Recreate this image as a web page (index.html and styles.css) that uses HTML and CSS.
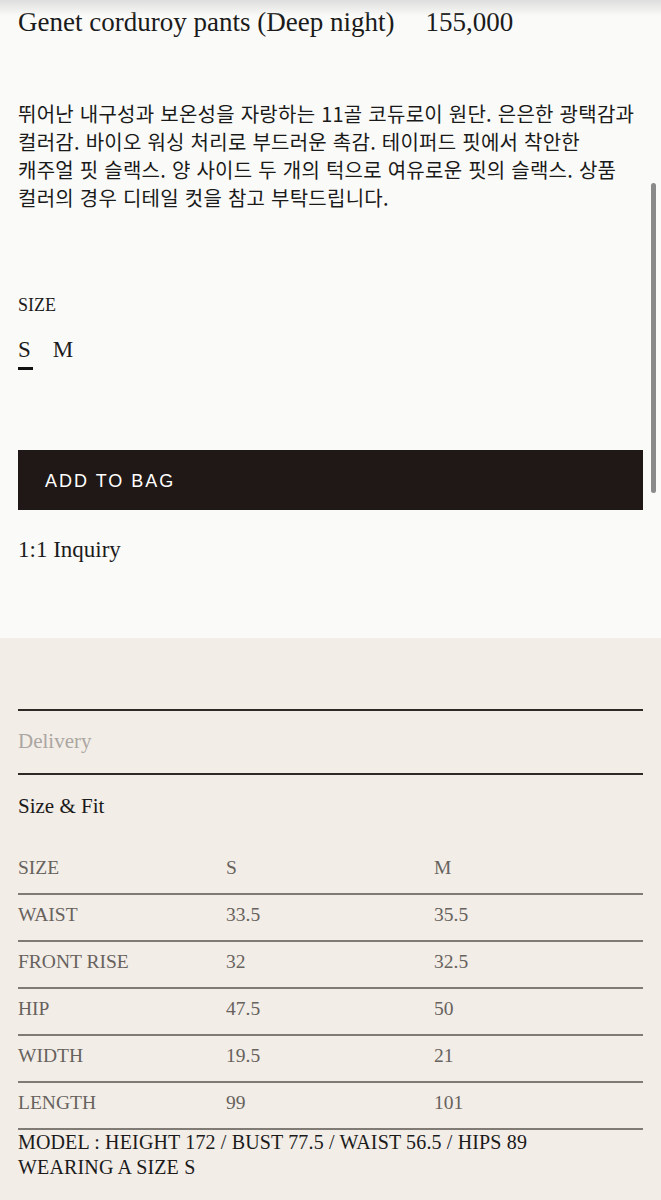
FILE: index.html
```html
<!DOCTYPE html>
<html lang="ko">
<head>
<meta charset="utf-8">
<title>Genet corduroy pants (Deep night)</title>
<link rel="stylesheet" href="styles.css">
</head>
<body>
<div class="top-shade"></div>
<div class="scrollbar"></div>
<main class="product">
  <header class="title-row">
    <h1 class="title">Genet corduroy pants (Deep night)</h1>
    <span class="price">155,000</span>
  </header>
  <p class="desc">뛰어난 내구성과 보온성을 자랑하는 11골 코듀로이 원단. 은은한 광택감과<br>컬러감. 바이오 워싱 처리로 부드러운 촉감. 테이퍼드 핏에서 착안한<br>캐주얼 핏 슬랙스. 양 사이드 두 개의 턱으로 여유로운 핏의 슬랙스. 상품<br>컬러의 경우 디테일 컷을 참고 부탁드립니다.</p>
  <section class="size-select">
    <div class="size-label">SIZE</div>
    <div class="options">
      <span class="opt active">S</span>
      <span class="opt">M</span>
    </div>
  </section>
  <button class="add-btn" type="button">ADD TO BAG</button>
  <a class="inquiry" href="#">1:1 Inquiry</a>
</main>
<section class="info">
  <div class="tab tab-muted">Delivery</div>
  <div class="tab tab-active">Size &amp; Fit</div>
  <table class="size-table">
    <tr><td>SIZE</td><td>S</td><td>M</td></tr>
    <tr><td>WAIST</td><td>33.5</td><td>35.5</td></tr>
    <tr><td>FRONT RISE</td><td>32</td><td>32.5</td></tr>
    <tr><td>HIP</td><td>47.5</td><td>50</td></tr>
    <tr><td>WIDTH</td><td>19.5</td><td>21</td></tr>
    <tr><td>LENGTH</td><td>99</td><td>101</td></tr>
  </table>
  <p class="model">MODEL : HEIGHT 172 / BUST 77.5 / WAIST 56.5 / HIPS 89<br>WEARING A SIZE S</p>
</section>
</body>
</html>
```
FILE: styles.css
```css
html, body {
  margin: 0;
  padding: 0;
}
body {
  background: #f2ede7;
  font-family: "Liberation Serif", "Times New Roman", serif;
  color: #1b1b1b;
}
.top-shade {
  position: absolute;
  left: 0;
  top: 0;
  width: 100%;
  height: 16px;
  background: linear-gradient(#dedede, rgba(250, 250, 248, 0));
  pointer-events: none;
}
.scrollbar {
  position: absolute;
  left: 651px;
  top: 183px;
  width: 5px;
  height: 310px;
  border-radius: 3px;
  background: #8a8a8a;
}
.product {
  background: #fafaf8;
  padding: 6px 18px 73px;
}
.title-row {
  display: flex;
  align-items: baseline;
  gap: 31px;
  line-height: 32px;
}
.title {
  margin: 0;
  font-weight: normal;
  font-size: 27px;
}
.price {
  font-size: 27px;
}
.desc {
  margin: 62px 0 0;
  font-family: "Noto Sans CJK KR", "Noto Sans", sans-serif;
  font-size: 20px;
  letter-spacing: 0.25px;
  line-height: 28px;
  color: #1a1a1a;
}
.size-select {
  margin-top: 81px;
}
.size-label {
  font-size: 18px;
  line-height: 24px;
}
.options {
  display: flex;
  gap: 20px;
  margin-top: 18px;
  align-items: flex-start;
}
.opt {
  font-size: 23px;
  line-height: 30px;
  padding: 0 2px 2px 0;
  border-bottom: 3px solid transparent;
}
.opt.active {
  border-bottom-color: #111;
}
.add-btn {
  display: block;
  width: 100%;
  height: 60px;
  margin-top: 80px;
  padding: 3px 0 0 27px;
  border: 0;
  background: #1f1816;
  color: #fff;
  text-align: left;
  font-family: "Liberation Sans", Arial, sans-serif;
  font-size: 18px;
  letter-spacing: 2px;
}
.inquiry {
  display: block;
  margin-top: 25px;
  font-size: 23px;
  line-height: 30px;
  color: #1b1b1b;
  text-decoration: none;
}
.info {
  padding: 71px 18px 40px;
}
.tab {
  border-top: 2px solid #2f2a25;
  font-size: 21px;
  line-height: 30px;
}
.tab-muted {
  padding: 15px 0 17px;
  color: #aba6a1;
}
.tab-active {
  padding: 16px 0 0;
  color: #1b1b1b;
}
.size-table {
  width: 100%;
  margin-top: 27px;
  border-collapse: collapse;
  font-size: 19.5px;
  color: #67625d;
}
.size-table td {
  padding: 8px 0 13px;
  line-height: 24px;
  border-bottom: 2px solid #807b75;
  text-align: left;
}
.size-table td:nth-child(1),
.size-table td:nth-child(2) {
  width: 208px;
}
.model {
  margin: 0;
  font-size: 20px;
  letter-spacing: 0.15px;
  line-height: 25px;
  color: #1b1b1b;
}
```
